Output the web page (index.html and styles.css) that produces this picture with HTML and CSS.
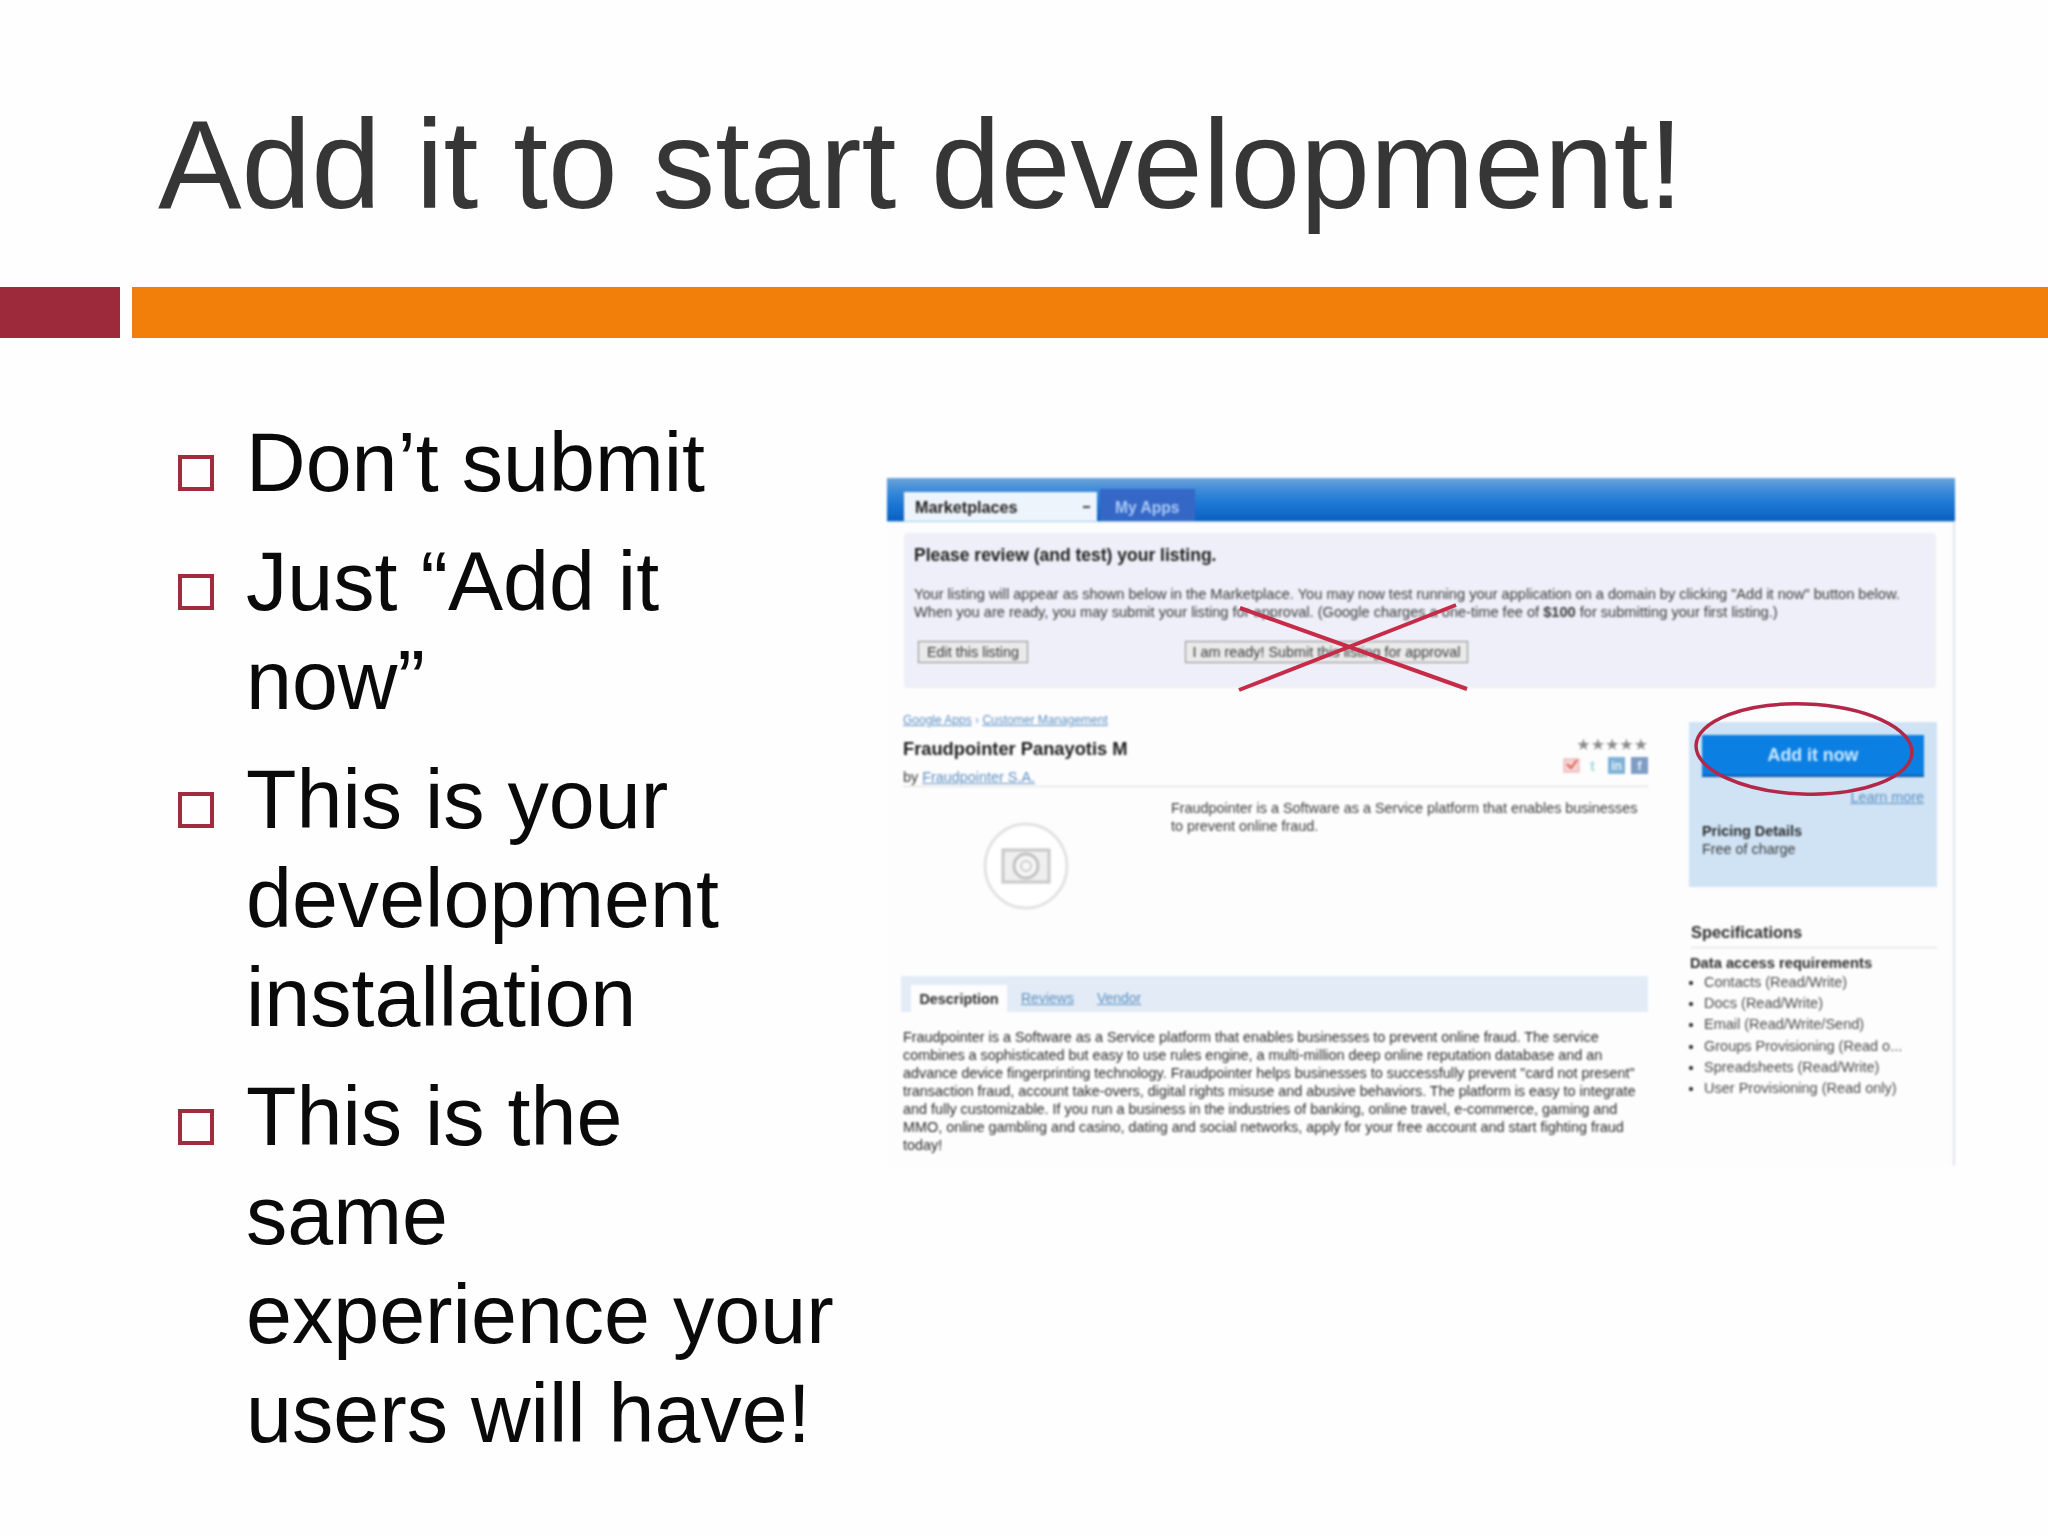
FILE: index.html
```html
<!DOCTYPE html>
<html lang="en">
<head>
<meta charset="utf-8">
<title>Add it to start development!</title>
<link rel="stylesheet" href="styles.css">
</head>
<body>
<main class="slide">
  <h1 class="title">Add it to start development!</h1>
  <div class="rule"><span class="rule-red"></span><span class="rule-orange"></span></div>
  <div class="content">
    <ul class="points">
      <li><span>Don’t submit</span></li>
      <li><span>Just “Add it<br>now”</span></li>
      <li><span>This is your<br>development<br>installation</span></li>
      <li><span>This is the<br>same<br>experience your<br>users will have!</span></li>
    </ul>
    <div class="shot">
      <div class="app">
        <div class="app-head">
          <div class="tab-market"><b>Marketplaces</b><i></i></div>
          <div class="tab-apps">My Apps</div>
        </div>
        <div class="app-body">
          <section class="review">
            <h2>Please review (and test) your listing.</h2>
            <p class="review-text">Your listing will appear as shown below in the Marketplace. You may now test running your application on a domain by clicking "Add it now" button below.<br>When you are ready, you may submit your listing for approval. (Google charges a one-time fee of <b>$100</b> for submitting your first listing.)</p>
            <div class="review-btns">
              <span class="btn btn-edit">Edit this listing</span>
              <span class="btn btn-submit">I am ready! Submit this listing for approval</span>
            </div>
          </section>
          <div class="listing">
            <div class="listing-main">
              <div class="crumb"><a>Google Apps</a> › <a>Customer Management</a></div>
              <div class="listing-head">
                <div>
                  <div class="name">Fraudpointer Panayotis M</div>
                  <div class="by">by <a>Fraudpointer S.A.</a></div>
                </div>
                <div class="meta">
                  <div class="stars">★★★★★</div>
                  <div class="social">
                    <svg class="ic-mail" width="17" height="17" viewBox="0 0 17 17"><rect x="1" y="2" width="15" height="13" fill="#f6d3d3" stroke="#e6a8a8"/><path d="M4 7l4 4 6-8" fill="none" stroke="#d8604f" stroke-width="2"/></svg>
                    <span class="soc soc-t">t</span>
                    <span class="soc soc-in">in</span>
                    <span class="soc soc-f">f</span>
                  </div>
                </div>
              </div>
              <div class="summary">
                <svg class="cam" width="86" height="88" viewBox="0 0 86 88"><ellipse cx="43" cy="44" rx="41" ry="42" fill="#fff" stroke="#e2e2e2" stroke-width="3"/><rect x="20" y="28" width="46" height="32" fill="#efefef" stroke="#c8c8c8" stroke-width="3"/><circle cx="43" cy="44" r="12" fill="#f6f6f6" stroke="#c2c2c2" stroke-width="3"/><circle cx="43" cy="44" r="5" fill="none" stroke="#cccccc" stroke-width="2"/></svg>
                <p>Fraudpointer is a Software as a Service platform that enables businesses<br>to prevent online fraud.</p>
              </div>
              <div class="tabs">
                <span class="tab-on">Description</span>
                <a class="tab-reviews">Reviews</a>
                <a class="tab-vendor">Vendor</a>
              </div>
              <p class="desc">Fraudpointer is a Software as a Service platform that enables businesses to prevent online fraud. The service<br>combines a sophisticated but easy to use rules engine, a multi-million deep online reputation database and an<br>advance device fingerprinting technology. Fraudpointer helps businesses to successfully prevent "card not present"<br>transaction fraud, account take-overs, digital rights misuse and abusive behaviors. The platform is easy to integrate<br>and fully customizable. If you run a business in the industries of banking, online travel, e-commerce, gaming and<br>MMO, online gambling and casino, dating and social networks, apply for your free account and start fighting fraud<br>today!</p>
            </div>
            <aside class="listing-side">
              <div class="buy">
                <div class="add-now">Add it now</div>
                <a class="learn">Learn more</a>
                <div class="price-h">Pricing Details</div>
                <div class="price">Free of charge</div>
              </div>
              <h3 class="spec-h">Specifications</h3>
              <div class="spec-sub">Data access requirements</div>
              <ul class="spec-list">
                <li>Contacts (Read/Write)</li>
                <li>Docs (Read/Write)</li>
                <li>Email (Read/Write/Send)</li>
                <li>Groups Provisioning (Read o...</li>
                <li>Spreadsheets (Read/Write)</li>
                <li>User Provisioning (Read only)</li>
              </ul>
            </aside>
          </div>
        </div>
      </div>
      <svg class="marks" width="1068" height="688" viewBox="887 478 1068 688">
        <path d="M1240 608L1467 689" fill="none" stroke="#c62c48" stroke-width="4"/>
        <path d="M1239 690L1456 605" fill="none" stroke="#c62c48" stroke-width="4"/>
        <ellipse cx="1804" cy="749" rx="108" ry="45" transform="rotate(2 1804 749)" fill="none" stroke="#b32848" stroke-width="3.5"/>
      </svg>
    </div>
  </div>
</main>
</body>
</html>
```
FILE: styles.css
```css
* { box-sizing: border-box; }
html, body { margin: 0; padding: 0; background: #fefefe; }
body { font-family: "Liberation Sans", Arial, sans-serif; }
.slide { width: 2048px; height: 1536px; overflow: hidden; background: #fefefe; }
.title { margin: 0; height: 287px; padding: 90px 0 0 158px; font-weight: 400; font-size: 125.3px; line-height: 150px; color: #363636; white-space: nowrap; }
.rule { display: flex; gap: 12px; height: 51px; }
.rule-red { width: 120px; background: #9c2a3a; }
.rule-orange { flex: 1; background: #f27f0a; }
.content { display: flex; align-items: flex-start; padding-left: 178px; }
.points { list-style: none; margin: 0; padding: 75px 0 0; width: 709px; flex: none; font-size: 82.6px; line-height: 99px; color: #0a0a0a; }
.points li { display: flex; gap: 32px; margin-bottom: 20px; white-space: nowrap; }
.points li::before { content: ""; box-sizing: border-box; flex: none; width: 36px; height: 36px; margin-top: 42px; border: 4px solid #a02c3e; }
.shot { position: relative; width: 1068px; height: 688px; margin-top: 140px; flex: none; }
.app { width: 100%; height: 100%; filter: blur(1px); color: #333; font-size: 14.4px; line-height: 18px; }
.marks { position: absolute; left: 0; top: 0; overflow: visible; filter: blur(0.6px); }
.app-head { height: 44px; display: flex; align-items: flex-end; gap: 3px; padding-left: 17px; background: linear-gradient(#6ea3d8 0%, #3a8ad9 30%, #1b76d3 62%, #0a5fc0 100%); border-bottom: 1px solid #9accf0; }
.tab-market { width: 193px; height: 29px; display: flex; justify-content: space-between; align-items: center; padding: 0 7px 0 11px; background: #eef4fb; color: #1c1c1c; font-size: 16.2px; }
.tab-market i { width: 7px; height: 2px; background: #444; }
.tab-apps { width: 95px; height: 32px; display: flex; align-items: center; padding: 5px 0 0 15px; background: #3567c6; color: #a9caf6; font-size: 15.6px; font-weight: 700; }
.app-body { height: 644px; padding: 11px 17px 0 16px; border-right: 2px solid #e3e5ea; background: #fdfdfe; }
.review { height: 155px; margin-left: 1px; padding: 12px 10px 0; background: #eeeff8; border-radius: 4px; }
.review h2 { margin: 0; font-size: 17.5px; line-height: 20px; color: #1c1c1c; font-weight: 700; }
.review-text { margin: 21px 0 0; font-size: 14.6px; line-height: 17.5px; white-space: nowrap; color: #3a3a3a; }
.review-btns { display: flex; gap: 157px; margin: 20px 0 0 4px; }
.btn { height: 22px; display: flex; align-items: center; justify-content: center; border: 1px solid #8f8f8f; background: #eaeaea; color: #3a3a3a; font-size: 14.4px; white-space: nowrap; }
.btn-edit { width: 110px; }
.btn-submit { width: 283px; }
.listing { display: grid; grid-template-columns: 745px 248px; gap: 41px; margin-top: 24px; }
a { color: #5c8fc2; text-decoration: underline; }
.crumb { height: 16px; font-size: 12px; line-height: 16px; color: #7fa3c8; white-space: nowrap; }
.listing-head { display: flex; justify-content: space-between; border-bottom: 1px solid #dcdcdc; }
.name { margin-top: 10px; font-size: 18.3px; line-height: 22px; font-weight: 700; color: #1c1c1c; }
.by { margin-top: 8px; font-size: 14.4px; line-height: 18px; color: #3a3a3a; }
.meta { display: flex; flex-direction: column; align-items: flex-end; }
.stars { margin-top: 8px; font-family: "DejaVu Sans", sans-serif; font-size: 16px; line-height: 18px; color: #8c8c8c; white-space: nowrap; }
.social { display: flex; align-items: center; gap: 7px; margin-top: 3px; margin-bottom: 4px; }
.soc { display: flex; align-items: center; justify-content: center; height: 17px; font-weight: 700; font-size: 12px; color: #e8f2fa; }
.soc-t { width: 11px; color: #a8dcd8; font-size: 15px; }
.soc-in { width: 17px; background: #7fb2d6; margin-left: 3px; }
.soc-f { width: 17px; background: #7f9dc4; margin-left: -1px; }
.summary { display: flex; height: 189px; padding: 12px 0 0 80px; }
.cam { flex: none; margin-top: 23px; }
.summary p { margin: 0 0 0 102px; font-size: 14.4px; line-height: 18px; white-space: nowrap; color: #3a3a3a; }
.tabs { display: flex; align-items: flex-end; height: 36px; margin-left: -2px; padding-left: 10px; background: #e3ecf6; }
.tab-on { width: 96px; height: 27px; display: flex; align-items: center; justify-content: center; background: #fdfdfe; font-size: 14.4px; font-weight: 700; color: #2c2c2c; }
.tabs a { align-self: center; margin-top: 8px; font-size: 14px; }
.tab-reviews { margin-left: 14px; }
.tab-vendor { margin-left: 23px; }
.desc { margin: 16px 0 0; font-size: 14.4px; line-height: 18px; white-space: nowrap; color: #2a2a2a; }
.listing-side { padding-top: 10px; min-width: 0; }
.buy { height: 165px; padding: 13px; background: #cfe3f5; color: #2c2c2c; }
.add-now { height: 42px; display: flex; align-items: center; justify-content: center; background: #0b7fe2; border-bottom: 2px solid #0a5aa8; color: #cdeaff; font-size: 17.8px; font-weight: 700; }
.learn { display: block; margin-top: 12px; font-size: 14.4px; line-height: 16px; text-align: right; }
.price-h { margin-top: 17px; font-size: 14.4px; font-weight: 700; }
.price { font-size: 14.4px; color: #3a3a3a; }
.spec-h { margin: 35px 0 0 2px; padding-bottom: 5px; border-bottom: 1px solid #dcdcdc; font-size: 16.4px; line-height: 20px; color: #2c2c2c; }
.spec-sub { margin: 6px 0 0 1px; font-size: 14.7px; font-weight: 700; color: #2c2c2c; }
.spec-list { list-style: disc; margin: 0; padding: 0 0 0 15px; font-size: 14.5px; line-height: 21.2px; color: #4a4a4a; white-space: nowrap; }
.spec-list li::marker { color: #1c1c1c; }
```
